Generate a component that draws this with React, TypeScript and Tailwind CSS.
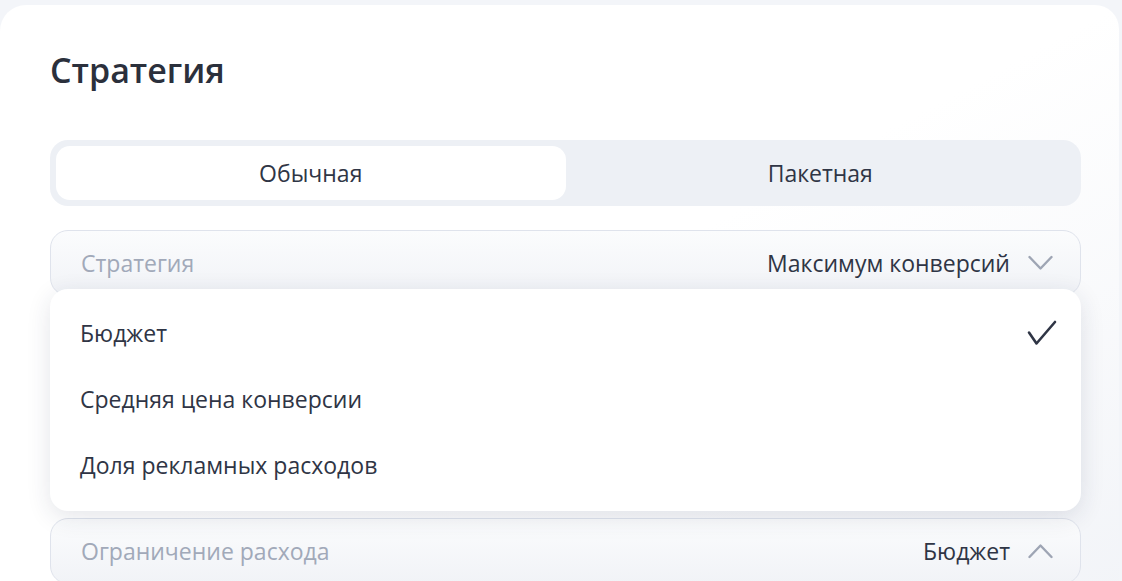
const font = { fontFamily: "'Open Sans', 'Noto Sans', sans-serif" };

function Chevron({ up }: { up?: boolean }) {
  return (
    <svg width="25" height="16" viewBox="0 0 25 16" fill="none" className="text-[#9ea5b4]">
      <polyline
        points={up ? "1.5,14 12.5,2.5 23.5,14" : "1.5,2 12.5,13.5 23.5,2"}
        stroke="currentColor"
        strokeWidth="2.4"
        strokeLinecap="round"
        strokeLinejoin="round"
      />
    </svg>
  );
}

function Field({ label, value, up }: { label: string; value: string; up?: boolean }) {
  return (
    <div className="flex h-[66px] items-center justify-between rounded-[18px] border border-[#dfe3ec] bg-gradient-to-b from-[#fbfcfd] to-[#f1f3f7] pl-[30px] pr-[27px]">
      <span className="text-[23px] text-[#a1a9b9]">{label}</span>
      <div className="flex items-center gap-[18px]">
        <span className="text-[23px] text-[#2f3545]">{value}</span>
        <Chevron up={up} />
      </div>
    </div>
  );
}

export default function App() {
  return (
    <div className="h-[581px] overflow-hidden bg-[#f3f5f9] pt-[5px] pr-[3px]" style={font}>
      <div className="h-[600px] rounded-tl-[26px] rounded-tr-[24px] bg-gradient-to-br from-white via-white to-[#f2f4f8] pl-[50px] pr-[38px] pt-[43px]">
        <h1 className="text-[34px] font-semibold leading-[44px] text-[#2b303c]">Стратегия</h1>

        <div className="mt-[48px] flex h-[66px] rounded-[18px] bg-[#edf0f5] p-[6px]">
          <div className="flex flex-1 items-center justify-center rounded-[14px] bg-white text-[23px] text-[#2f3545]">
            Обычная
          </div>
          <div className="flex flex-1 items-center justify-center text-[23px] text-[#2f3545]">Пакетная</div>
        </div>

        <div className="relative mt-[24px]">
          <Field label="Стратегия" value="Максимум конверсий" />
          <div className="relative z-10 -mt-[7px] rounded-[18px] bg-white pt-[11px] pb-[13px] shadow-[0_6px_24px_rgba(30,40,70,0.12)]">
            <div className="flex h-[66px] items-center justify-between pl-[30px] pr-[24px]">
              <span className="text-[23px] text-[#2f3545]">Бюджет</span>
              <svg width="30" height="26" viewBox="0 0 30 26" fill="none" className="text-[#2f3545]">
                <polyline
                  points="2,12.5 9.5,23.5 28,2"
                  stroke="currentColor"
                  strokeWidth="2.6"
                  strokeLinecap="round"
                  strokeLinejoin="round"
                />
              </svg>
            </div>
            <div className="flex h-[66px] items-center pl-[30px]">
              <span className="text-[23px] text-[#2f3545]">Средняя цена конверсии</span>
            </div>
            <div className="flex h-[66px] items-center pl-[30px]">
              <span className="text-[23px] text-[#2f3545]">Доля рекламных расходов</span>
            </div>
          </div>
          <div className="mt-[7px]">
            <Field label="Ограничение расхода" value="Бюджет" up />
          </div>
        </div>
      </div>
    </div>
  );
}
